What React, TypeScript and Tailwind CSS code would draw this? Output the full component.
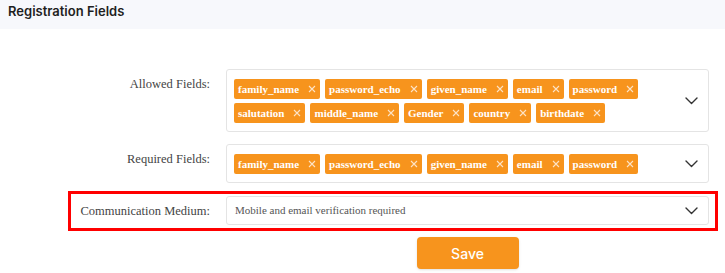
import * as React from "react"

const allowed = [
  "family_name",
  "password_echo",
  "given_name",
  "email",
  "password",
  "salutation",
  "middle_name",
  "Gender",
  "country",
  "birthdate",
]

const required = ["family_name", "password_echo", "given_name", "email", "password"]

function Chevron() {
  return (
    <svg width="13" height="8" viewBox="0 0 13 8" fill="none">
      <polyline points="1,1 6.5,6.5 12,1" stroke="#333" strokeWidth="1.4" strokeLinecap="round" strokeLinejoin="round" />
    </svg>
  )
}

function Tag({ label }: { label: string }) {
  return (
    <span className="flex h-[20px] items-center rounded-[2px] bg-[#f7941d] pl-[4px] pr-[4px] text-[11px] font-bold text-white">
      <span>{label}</span>
      <svg className="ml-[9px]" width="8" height="8" viewBox="0 0 8 8" fill="none">
        <path d="M1 1L7 7M7 1L1 7" stroke="#fde3c6" strokeWidth="1.1" />
      </svg>
    </span>
  )
}

function MultiSelect({ items }: { items: string[] }) {
  return (
    <div className="mr-[6px] flex flex-1 rounded-[3px] border border-[#e4e4e4] bg-white">
      <div className="flex flex-1 flex-wrap gap-x-[5px] gap-y-[4px] pt-[9px] pb-[8px] pl-[7px]">
        {items.map((item) => (
          <Tag key={item} label={item} />
        ))}
      </div>
      <div className="flex w-[34px] items-center justify-center">
        <Chevron />
      </div>
    </div>
  )
}

function Label({ children }: { children: React.ReactNode }) {
  return (
    <div className="mr-[16px] w-[139px] shrink-0 pt-[6px] text-right text-[12.5px] leading-[18px] text-[#444]">
      {children}
    </div>
  )
}

export default function App() {
  return (
    <div className="h-[273px] w-[725px] overflow-hidden bg-white font-['Liberation_Serif',serif]">
      <div className="h-[29px] bg-[#f7f8fc] pl-[8px] pt-[3px] font-['Inter',sans-serif] text-[13px] font-semibold leading-[16px] text-[#1f1f1f]">
        Registration Fields
      </div>

      <div className="pl-[68px] pr-[7px]">
        <div className="mt-[35px] flex border-[3px] border-transparent py-[2px]">
          <Label>Allowed Fields:</Label>
          <MultiSelect items={allowed} />
        </div>

        <div className="mt-[2px] flex border-[3px] border-transparent py-[2px]">
          <Label>Required Fields:</Label>
          <MultiSelect items={required} />
        </div>

        <div className="mt-[3px] flex border-[3px] border-[#ff0000] pt-[2px] pb-[3px]">
          <Label>Communication Medium:</Label>
          <div className="mr-[6px] flex h-[29px] flex-1 items-center rounded-[3px] border border-[#e4e4e4] bg-white">
            <span className="flex-1 pl-[8px] text-[11px] text-[#555]">Mobile and email verification required</span>
            <div className="flex w-[34px] items-center justify-center">
              <Chevron />
            </div>
          </div>
        </div>

        <div className="mt-[6px] flex">
          <div className="mr-[16px] w-[142px] shrink-0" />
          <div className="mr-[9px] flex flex-1 justify-center">
            <button className="h-[32px] w-[102px] rounded-[4px] bg-[#f7941d] font-['Inter',sans-serif] text-[14px] font-medium text-white shadow-sm">
              Save
            </button>
          </div>
        </div>
      </div>
    </div>
  )
}
